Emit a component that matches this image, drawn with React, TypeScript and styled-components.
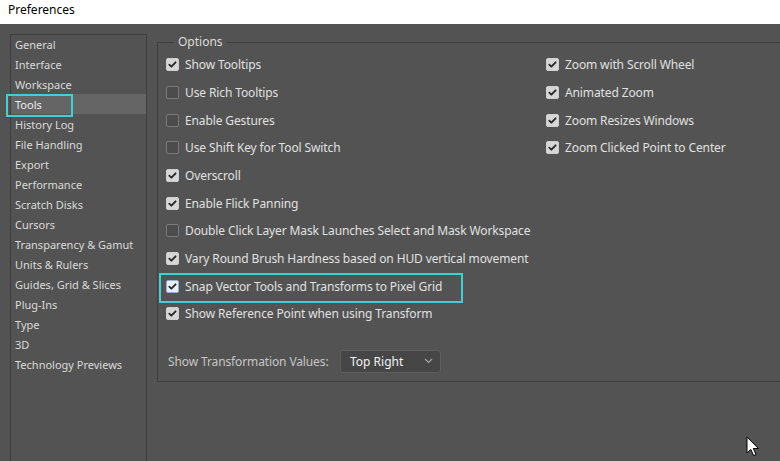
import React from "react";
import styled, { createGlobalStyle, css } from "styled-components";

const GlobalStyle = createGlobalStyle`
  html, body { margin: 0; padding: 0; background: #535353; }
  body { font-family: "Noto Sans", "Open Sans", Arial, sans-serif; }
  * { box-sizing: border-box; }
`;

const Window = styled.div`
  position: relative;
  width: 780px;
  height: 461px;
  overflow: hidden;
  display: flex;
  flex-direction: column;
  background: #535353;
`;

const TitleBar = styled.div`
  height: 24px;
  flex: none;
  background: #ffffff;
  color: #000;
  font-size: 12px;
  display: flex;
  align-items: center;
  padding-left: 8px;
  padding-bottom: 6px;
`;

const Body = styled.div`
  flex: 1;
  display: flex;
  align-items: stretch;
  gap: 10px;
  padding: 10px 0 0 10px;
  min-height: 0;
`;

const Sidebar = styled.div`
  width: 137px;
  flex: none;
  border: 1px solid #3e3e3e;
  border-bottom: none;
`;

const NavList = styled.div`
  margin-top: -1px;
`;

const NavItem = styled.div<{ $selected?: boolean }>`
  position: relative;
  height: 20px;
  display: flex;
  align-items: center;
  padding-left: 4px;
  font-size: 11px;
  color: #dadada;
  white-space: nowrap;
  ${(p) =>
    p.$selected &&
    css`
      background: #656565;
      color: #ececec;
    `}
`;

const Highlight = styled.span<{ $l: number; $t: number; $w: number; $h: number }>`
  position: absolute;
  left: ${(p) => p.$l}px;
  top: ${(p) => p.$t}px;
  width: ${(p) => p.$w}px;
  height: ${(p) => p.$h}px;
  border: 2px solid #3fcfd6;
  pointer-events: none;
`;

const Group = styled.fieldset`
  align-self: flex-start;
  flex: 1;
  margin: 0 -30px 0 0;
  padding: 1px 0 8px 8px;
  border: 1px solid #3f3f3f;
  min-width: 0;
`;

const Legend = styled.legend`
  margin-left: 8px;
  padding: 0 4px;
  font-size: 12px;
  line-height: 16px;
  color: #dcdcdc;
`;

const Columns = styled.div`
  display: flex;
`;

const Column = styled.div<{ $w?: number }>`
  display: flex;
  flex-direction: column;
  width: ${(p) => (p.$w ? `${p.$w}px` : "auto")};
`;

const Row = styled.div`
  position: relative;
  height: 27.67px;
  display: flex;
  align-items: center;
  gap: 6px;
  font-size: 12px;
  letter-spacing: -0.12px;
  color: #e0e0e0;
  white-space: nowrap;
`;

const Box = styled.span<{ $checked?: boolean; $focus?: boolean }>`
  width: 13px;
  height: 13px;
  flex: none;
  border-radius: 2px;
  display: flex;
  align-items: center;
  justify-content: center;
  border: 1px solid ${(p) => (p.$focus ? "#8fb0e6" : p.$checked ? "#cfcfcf" : "#7a7a7a")};
  background: ${(p) => (p.$focus ? "#e9eef7" : p.$checked ? "#d6d6d6" : "#4c4c4c")};
`;

const BottomRow = styled.div`
  display: flex;
  align-items: center;
  margin-top: 22px;
  padding-left: 2px;
`;

const FieldLabel = styled.span`
  width: 172px;
  font-size: 12px;
  letter-spacing: -0.12px;
  color: #c6c6c6;
  white-space: nowrap;
`;

const Select = styled.div`
  width: 101px;
  height: 23px;
  display: flex;
  align-items: center;
  justify-content: space-between;
  padding: 0 7px 0 9px;
  border: 1px solid #5e5e5e;
  border-radius: 3px;
  background: #464646;
  color: #f2f2f2;
  font-size: 12px;
`;

const Cursor = styled.svg`
  position: absolute;
  left: 746px;
  top: 436px;
`;

function Check({ checked, focus }: { checked?: boolean; focus?: boolean }) {
  return (
    <Box $checked={checked} $focus={focus}>
      {checked && (
        <svg width="9" height="9" viewBox="0 0 9 9">
          <path d="M1.3 4.6 L3.4 6.7 L7.6 2.3" fill="none" stroke="#262626" strokeWidth="1.8" strokeLinecap="round" strokeLinejoin="round" />
        </svg>
      )}
    </Box>
  );
}

const navItems = [
  "General",
  "Interface",
  "Workspace",
  "Tools",
  "History Log",
  "File Handling",
  "Export",
  "Performance",
  "Scratch Disks",
  "Cursors",
  "Transparency & Gamut",
  "Units & Rulers",
  "Guides, Grid & Slices",
  "Plug-Ins",
  "Type",
  "3D",
  "Technology Previews",
];

const leftOptions: [string, boolean][] = [
  ["Show Tooltips", true],
  ["Use Rich Tooltips", false],
  ["Enable Gestures", false],
  ["Use Shift Key for Tool Switch", false],
  ["Overscroll", true],
  ["Enable Flick Panning", true],
  ["Double Click Layer Mask Launches Select and Mask Workspace", false],
  ["Vary Round Brush Hardness based on HUD vertical movement", true],
  ["Snap Vector Tools and Transforms to Pixel Grid", true],
  ["Show Reference Point when using Transform", true],
];

const rightOptions: [string, boolean][] = [
  ["Zoom with Scroll Wheel", true],
  ["Animated Zoom", true],
  ["Zoom Resizes Windows", true],
  ["Zoom Clicked Point to Center", true],
];

export default function App() {
  return (
    <>
      <GlobalStyle />
      <Window>
        <TitleBar>Preferences</TitleBar>
        <Body>
          <Sidebar>
            <NavList>
              {navItems.map((n) => (
                <NavItem key={n} $selected={n === "Tools"}>
                  {n}
                  {n === "Tools" && <Highlight $l={-5} $t={0} $w={67} $h={23} />}
                </NavItem>
              ))}
            </NavList>
          </Sidebar>
          <Group>
            <Legend>Options</Legend>
            <Columns>
              <Column $w={380}>
                {leftOptions.map(([t, c]) => {
                  const snap = t.startsWith("Snap");
                  return (
                    <Row key={t}>
                      <Check checked={c} focus={snap} />
                      {t}
                      {snap && <Highlight $l={-7} $t={1} $w={304} $h={30} />}
                    </Row>
                  );
                })}
              </Column>
              <Column>
                {rightOptions.map(([t, c]) => (
                  <Row key={t}>
                    <Check checked={c} />
                    {t}
                  </Row>
                ))}
              </Column>
            </Columns>
            <BottomRow>
              <FieldLabel>Show Transformation Values:</FieldLabel>
              <Select>
                <span>Top Right</span>
                <svg width="9" height="6" viewBox="0 0 9 6">
                  <path d="M1 1 L4.5 4.5 L8 1" fill="none" stroke="#a8a8a8" strokeWidth="1.1" />
                </svg>
              </Select>
            </BottomRow>
          </Group>
        </Body>
        <Cursor width="14" height="22" viewBox="0 0 14 22">
          <path d="M1 1 L1 17 L4.8 13.4 L7.6 19.6 L10 18.6 L7.3 12.5 L12.4 12.5 Z" fill="#ffffff" stroke="#000000" strokeWidth="1" strokeLinejoin="miter" />
        </Cursor>
      </Window>
    </>
  );
}
